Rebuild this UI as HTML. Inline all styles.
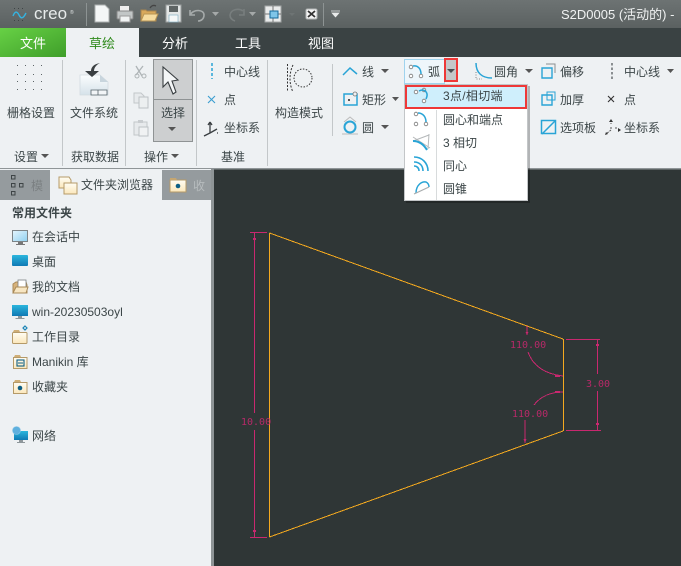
<!DOCTYPE html>
<html><head><meta charset="utf-8">
<style>
html,body{margin:0;padding:0;width:681px;height:566px;overflow:hidden;background:#2f3636;}
svg{position:absolute;left:0;top:0;display:block}
text{font-family:"Liberation Sans","Noto Sans CJK SC",sans-serif;font-size:12px;fill:#3c4648}
.w{fill:#fff;font-size:13px}
.d{font-family:"DejaVu Sans Mono","Liberation Mono",monospace;font-size:10px;fill:#c9286f;opacity:.88}
.sep{stroke:#c3c7c9;stroke-width:1}
.ic{fill:none;stroke:#29a4d6;stroke-width:1.5}
</style></head>
<body>
<svg width="681" height="566" viewBox="0 0 681 566" xmlns="http://www.w3.org/2000/svg">
<defs>
<linearGradient id="tb" x1="0" y1="0" x2="0" y2="1"><stop offset="0" stop-color="#6d7373"/><stop offset="1" stop-color="#5b6161"/></linearGradient>
<linearGradient id="gr" x1="0" y1="0" x2="1" y2="1"><stop offset="0" stop-color="#67d145"/><stop offset="1" stop-color="#3f9e2a"/></linearGradient>
<linearGradient id="bl" x1="0" y1="0" x2="0" y2="1"><stop offset="0" stop-color="#2bb6dd"/><stop offset="1" stop-color="#0f79b4"/></linearGradient>
<linearGradient id="mo" x1="0" y1="0" x2="1" y2="1"><stop offset="0" stop-color="#e5f5fd"/><stop offset="1" stop-color="#8fd0f0"/></linearGradient>
<linearGradient id="fo" x1="0" y1="0" x2="0" y2="1"><stop offset="0" stop-color="#fffdf4"/><stop offset="1" stop-color="#fbe7bb"/></linearGradient>
<linearGradient id="pa" x1="0" y1="0" x2="0" y2="1"><stop offset="0" stop-color="#fbfdfe"/><stop offset="1" stop-color="#d5e2ea"/></linearGradient>
</defs>

<!-- title bar -->
<rect width="681" height="28" fill="url(#tb)"/>
<g fill="#3d4344"><rect x="14" y="8" width="1" height="1"/><rect x="18" y="8" width="1" height="1"/><rect x="22" y="8" width="1" height="1"/><rect x="14" y="20" width="1" height="1"/><rect x="18" y="20" width="1" height="1"/><rect x="22" y="20" width="1" height="1"/></g>
<path d="M13 16c2-5 4-5 6-1s4 4 7-2" fill="none" stroke="#35b3e0" stroke-width="1.400"/>
<text x="34" y="19" style="font-size:17px;fill:#e7ebeb">creo</text>
<text x="70" y="14" style="font-size:5px;fill:#dfe3e3">®</text>
<line x1="86.500" y1="3" x2="86.500" y2="26" stroke="#8d9393"/>
<!-- new -->
<path d="M95 5h10l4 4v13H95z" fill="#f4f6f6" stroke="#acb0b0"/>
<!-- print -->
<path d="M120 6h9v5h-9z" fill="#eee"/><rect x="117" y="11" width="16" height="8" rx="1" fill="#c2c6c6" stroke="#888"/><rect x="120" y="16" width="10" height="6" fill="#f1f3f3" stroke="#999"/>
<!-- open -->
<path d="M141 21V10h5l1 1h9v10z" fill="#d9a95c" stroke="#a78550"/><path d="M141 21l3-7h14l-3 7z" fill="#f6dca0" stroke="#b89555"/><path d="M150 8c2-3 4-3 6-2" fill="none" stroke="#444" stroke-width="1.300"/>
<!-- save -->
<rect x="166" y="5" width="15" height="17" fill="#e3e6e6" stroke="#9a9e9e"/><rect x="169" y="6" width="9" height="6" fill="#5e6464"/><rect x="169" y="15" width="9" height="7" fill="#f5f7f7" stroke="#7aa9c0" stroke-width=".6"/>
<!-- undo -->
<path d="M190 10v5h5M190 15c3-6 14-6 14 0 0 4-3 6-6 6" fill="none" stroke="#a5aaaa" stroke-width="1.600"/>
<path d="M212 12h7l-3.500 4z" fill="#a5a9a9"/>
<path d="M243 11c-4-3-12-2-13 4 0 3 2 5 5 6M244 9v6h-5" fill="none" stroke="#787e7e" stroke-width="1.600"/>
<path d="M249 12h7l-3.500 4z" fill="#a5a9a9"/>
<!-- windows -->
<rect x="265" y="6" width="16" height="16" fill="#e9ebeb" stroke="#a2a6a6"/><path d="M265 14h16M273 6v16" stroke="#777" fill="none"/><rect x="270" y="11" width="8" height="7" fill="#7fc5e8" stroke="#16699a"/>
<path d="M289 13h6l-3 3z" fill="#6e7474"/>
<rect x="306" y="9" width="11" height="10" rx="1.500" fill="#f5f5f5" stroke="#b3b6b6"/><path d="M308 11l7 6m0-6l-7 6" stroke="#333" stroke-width="1.800"/>
<line x1="323.500" y1="3" x2="323.500" y2="26" stroke="#8d9393"/>
<path d="M331 11h9M332 13h7l-3.500 4z" fill="#e8eaea" stroke="#e8eaea" stroke-width=".7"/>
<text x="561" y="19" style="font-size:13px;fill:#f0f2f2">S2D0005 (活动的) -</text>

<!-- tab bar -->
<rect y="28" width="681" height="29" fill="#3a4243"/>
<rect y="28" width="66" height="29" fill="url(#gr)"/>
<rect x="66" y="28" width="73" height="29" fill="#eef1f3"/>
<text x="20" y="48" class="w">文件</text>
<text x="89" y="48" style="font-size:13px;fill:#2f8a1c">草绘</text>
<text x="162" y="48" class="w">分析</text>
<text x="235" y="48" class="w">工具</text>
<text x="308" y="48" class="w">视图</text>

<!-- ribbon -->
<rect y="57" width="681" height="111" fill="#eef1f3"/>
<rect y="168" width="681" height="1.500" fill="#8f9597"/>
<g class="sep">
<line x1="62.500" y1="60" x2="62.500" y2="166"/><line x1="125.500" y1="60" x2="125.500" y2="166"/><line x1="196.500" y1="60" x2="196.500" y2="166"/><line x1="267.500" y1="60" x2="267.500" y2="166"/><line x1="332.500" y1="64" x2="332.500" y2="136"/>
</g>
<!-- grid dots -->
<g fill="#5c6466">
<rect x="17" y="65" width="1" height="1"/><rect x="25" y="65" width="1" height="1"/><rect x="33" y="65" width="1" height="1"/><rect x="41" y="65" width="1" height="1"/>
<rect x="17" y="74" width="1" height="1"/><rect x="25" y="74" width="1" height="1"/><rect x="33" y="74" width="1" height="1"/><rect x="41" y="74" width="1" height="1"/>
<rect x="17" y="81" width="1" height="1"/><rect x="25" y="81" width="1" height="1"/><rect x="33" y="81" width="1" height="1"/><rect x="41" y="81" width="1" height="1"/>
<rect x="17" y="89" width="1" height="1"/><rect x="25" y="89" width="1" height="1"/><rect x="33" y="89" width="1" height="1"/><rect x="41" y="89" width="1" height="1"/>
</g>
<text x="7" y="117">栅格设置</text>
<text x="14" y="161">设置</text><path d="M41 154h8l-4 4z" fill="#555"/>
<!-- file system -->
<path d="M80 75h20l8 7v13H80z" fill="url(#pa)" stroke="#d3dbe0" stroke-width=".8"/><path d="M100 75v7h8" fill="#c8d5dd"/>
<path d="M91 90h16v5H91zM98 90v5" fill="#f2f5f7" stroke="#56636a" stroke-width=".8"/>
<path d="M100 63c-6 1-9 4-9 8h-6l7 6 7-6h-5c0-3 2-6 6-8z" fill="#3b4042"/>
<text x="70" y="117">文件系统</text>
<text x="71" y="161">获取数据</text>
<!-- clipboard ops -->
<path d="M136 66l6 10m1-10l-7 9" stroke="#aeb4b6" stroke-width="1.300" fill="none"/><circle cx="137" cy="76" r="2" fill="none" stroke="#aeb4b6"/><circle cx="144" cy="76" r="2" fill="none" stroke="#aeb4b6"/>
<path d="M134 93h7l3 3v7h-10z" fill="#e7eaec" stroke="#c3c8ca"/><path d="M139 97h9v11h-9z" fill="#eceff0" stroke="#bcc1c4"/>
<path d="M134 122h13v13h-13z" fill="#e7eaec" stroke="#c3c8ca"/><path d="M139 127h9v9h-9z" fill="#f0f2f3" stroke="#bcc1c4"/><rect x="138" y="120" width="5" height="3" fill="#c8cccf"/>
<!-- select -->
<rect x="153.500" y="59.500" width="39" height="82" fill="#cdcfd0" stroke="#8f9394"/><line x1="153" y1="99.500" x2="192" y2="99.500" stroke="#8f9394"/>
<path d="M163 67v20l5-5 5 12 3-2-4-11 6-1z" fill="#f4f6f7" stroke="#3a3f42" stroke-width="1.100"/>
<text x="161" y="117">选择</text>
<path d="M168 127h8l-4 4z" fill="#555"/>
<text x="144" y="161">操作</text><path d="M171 154h8l-4 4z" fill="#555"/>
<!-- datum -->
<line x1="212" y1="63" x2="212" y2="79" stroke="#29a4d6" stroke-width="1.500" stroke-dasharray="3 2"/>
<text x="224" y="76">中心线</text>
<path d="M208 96l7 7m0-7l-7 7" stroke="#3a9ed0" stroke-width="1.100"/>
<text x="224" y="104">点</text>
<path d="M210 122v11m0 0l7-4m-7 4l-6 3m6-14l-2 3m2-3l2 3m5 8h1" fill="none" stroke="#3a3f42" stroke-width="1.300"/>
<text x="224" y="132">坐标系</text>
<text x="221" y="161">基准</text>
<!-- construction -->
<path d="M287.500 64V92" fill="none" stroke="#333" stroke-dasharray="2 1.500"/>
<path d="M293 65c-4 8-4 19 0 27" fill="none" stroke="#333" stroke-dasharray="2 1.500"/>
<circle cx="303" cy="78" r="9" fill="none" stroke="#333" stroke-dasharray="1.500 1.500"/>
<text x="275" y="117">构造模式</text>

<!-- Sketch group -->
<path d="M343 75l7-7 7 6" class="ic"/>
<text x="362" y="76">线</text><path d="M381 69h8l-4 4z" fill="#555"/>
<rect x="344" y="94" width="13" height="11" fill="none" stroke="#29a4d6" stroke-width="1.500"/><circle cx="355" cy="94" r="2" fill="#eef1f3" stroke="#777" stroke-width=".8"/><rect x="348" y="99" width="2" height="2" fill="#555"/>
<text x="362" y="104">矩形</text><path d="M392 97h7l-3.500 4z" fill="#555"/>
<path d="M342 134h16M344 122l6-5 6 5" fill="none" stroke="#bbb"/><circle cx="350" cy="127" r="5.500" fill="none" stroke="#29a4d6" stroke-width="2"/>
<text x="362" y="132">圆</text><path d="M381 125h8l-4 4z" fill="#555"/>

<!-- arc button -->
<rect x="404.500" y="59.500" width="40" height="24" fill="#eef6fb" stroke="#9fd3ee"/>
<circle cx="411" cy="67" r="1.800" fill="#fff" stroke="#777" stroke-width=".8"/><circle cx="411" cy="76" r="1.800" fill="#fff" stroke="#777" stroke-width=".8"/><circle cx="421" cy="76" r="1.800" fill="#fff" stroke="#777" stroke-width=".8"/>
<path d="M413 66c5-1 8 3 8 8" class="ic"/>
<text x="428" y="76">弧</text>
<rect x="445" y="59" width="12" height="22" fill="#c4c7c9" stroke="#ee3838" stroke-width="2"/>
<path d="M447 69h8l-4 4z" fill="#4a4f52"/>

<!-- fillet etc -->
<path d="M476 63c0 10 6 15 16 15" fill="none" stroke="#29a4d6" stroke-width="1.500"/><path d="M476 72v7h6" fill="none" stroke="#888" stroke-dasharray="1 1.500"/>
<text x="494" y="76">圆角</text><path d="M525 69h8l-4 4z" fill="#555"/>
<path d="M542 68h10v10h-10z" fill="none" stroke="#29a4d6" stroke-width="1.400"/><path d="M546 64h9v9" fill="none" stroke="#8a8f92"/>
<text x="560" y="76">偏移</text>
<path d="M542 95h10v10h-10z" fill="none" stroke="#29a4d6" stroke-width="1.400"/><rect x="547" y="92" width="8" height="8" fill="none" stroke="#29a4d6"/>
<text x="560" y="104">加厚</text>
<rect x="541.500" y="120.500" width="14" height="13" fill="#eef1f3" stroke="#29a4d6" stroke-width="1.500"/><path d="M542 134l13-13" stroke="#29a4d6" stroke-width="1.500"/>
<text x="560" y="132">选项板</text>
<line x1="612" y1="63" x2="612" y2="80" stroke="#3a3f42" stroke-width="1.100" stroke-dasharray="2.500 2"/>
<text x="624" y="76">中心线</text><path d="M667 69h7l-3.500 4z" fill="#555"/>
<path d="M608 96l6 6m0-6l-6 6" stroke="#333" stroke-width="1.100"/>
<text x="624" y="104">点</text>
<path d="M611 120v4m0 3v3l-5 4m9-6h3" fill="none" stroke="#555" stroke-dasharray="2 1"/><path d="M609 122l2-3 2 3zM605 135l3-1-2-2zM618 128l3 2-3 2z" fill="#333"/>
<text x="624" y="132">坐标系</text>

<!-- left tabs / panel -->
<rect y="169" width="211" height="397" fill="#eef1f3"/>
<rect y="170" width="50" height="30" fill="#959b9e"/>
<rect x="162" y="170" width="49" height="30" fill="#959b9e"/>
<rect x="50" y="170" width="112" height="30" fill="#eef1f3"/>
<rect x="211" y="169" width="3" height="397" fill="#8e9496"/>
<g fill="none" stroke="#3e4446"><rect x="11.500" y="175.500" width="3.500" height="3.500"/><rect x="11.500" y="183.500" width="3.500" height="3.500"/><rect x="11.500" y="191.500" width="3.500" height="3.500"/><rect x="19.500" y="183.500" width="3.500" height="3.500"/></g>
<text x="31" y="190" style="fill:#7b8082">模</text>
<path d="M59 177h10l2 3v8H59z" fill="url(#fo)" stroke="#b59a68"/><path d="M64 183h13v11H64z" fill="url(#fo)" stroke="#b59a68"/>
<text x="81" y="189">文件夹浏览器</text>
<rect x="170" y="180" width="16" height="12" fill="url(#fo)" stroke="#b59a68"/><path d="M170 178h6l1 2h-7z" fill="#c5a671"/><circle cx="178" cy="186" r="2.300" fill="#0d5f85"/>
<text x="193" y="190" style="fill:#b7bcbe">收</text>

<text x="12" y="217" style="font-weight:700">常用文件夹</text>
<!-- monitor -->
<rect x="12.500" y="230.500" width="15" height="11" fill="url(#mo)" stroke="#7d8487"/><path d="M18 242h5v2h-5zM16 244h9v1h-9z" fill="#777"/>
<text x="32" y="241">在会话中</text>
<rect x="12" y="255" width="16" height="11" rx="1" fill="url(#bl)"/>
<text x="32" y="266">桌面</text>
<path d="M13 293v-9l3-2h10l1 3v8z" fill="#d7b27a" stroke="#a98a58"/><rect x="18" y="280" width="8" height="9" fill="#fff" stroke="#7a8184" stroke-width=".8"/><path d="M13 293l3-6h12l-2 6z" fill="#f7e6c2" stroke="#a98a58"/>
<text x="32" y="291">我的文档</text>
<rect x="12" y="305" width="16" height="11" fill="url(#bl)"/><path d="M18 316h4v2h-4zM15.500 318h9v1h-9z" fill="#8e979b"/>
<text x="32" y="316">win-20230503oyl</text>
<rect x="12.500" y="332.500" width="14.500" height="11" rx="1" fill="url(#fo)" stroke="#b59a68"/><path d="M13 332l1-2h5l1 2z" fill="#cfae76"/><path d="M25 326l2 2-2 2-2-2z" fill="none" stroke="#1a84b5" stroke-width="1.200"/>
<text x="32" y="341">工作目录</text>
<rect x="13.500" y="357.500" width="13.500" height="11" fill="url(#fo)" stroke="#b59a68"/><path d="M14 357l1-2h5l1 2z" fill="#cfae76"/><rect x="17" y="360" width="7" height="6" fill="none" stroke="#0d5f85" stroke-width="1.100"/><path d="M18 363h5" stroke="#0d5f85"/>
<text x="32" y="366">Manikin 库</text>
<rect x="13.500" y="382.500" width="13.500" height="11" fill="url(#fo)" stroke="#b59a68"/><path d="M14 382l1-2h5l1 2z" fill="#cfae76"/><circle cx="20" cy="388" r="2.300" fill="#0d5f85"/>
<text x="32" y="391">收藏夹</text>
<rect x="14" y="431" width="14" height="9" fill="url(#bl)"/><path d="M19 440h4v2h-4zM17 442h8v1h-8z" fill="#8e979b"/><circle cx="16.500" cy="430.500" r="4" fill="#5fb0de" stroke="#8ec7e6" stroke-width=".6"/>
<text x="32" y="440">网络</text>

<!-- Drawing -->
<rect x="214" y="169.500" width="467" height="396.500" fill="#2f3636"/>
<g fill="none" stroke="#f4a91f" stroke-width="1" shape-rendering="crispEdges">
<path d="M269.500 233L563 339M269.500 537L563 431"/>
<path d="M269.500 233V537"/>
<path d="M563.500 339V431"/>
</g>
<g fill="none" stroke="#c9286f" stroke-width="1" shape-rendering="crispEdges">
<path d="M250 232.500H267M254.500 232.500V413M254.500 430V537.500M250 537.500H267"/>
<path d="M566 339.500H600M597.500 339.500V374M597.500 391V430.500M566 430.500H601"/>
<path d="M528 352C533 366 545 374 563 376"/>
<path d="M534 405C540 397 550 392 563 392"/>
<path d="M527 326V335M525 420V443"/>
</g>
<g fill="#c9286f">
<path d="M253 238h3v2h-3zM253 530h3v2h-3zM596 344h3v2h-3zM596 423h3v2h-3z"/>
<path d="M555 375l5 0v2h-5zM555 391l5 0v2h-5zM525.500 332h3l-1.500 3zM523.500 439h3l-1.500 4z"/>
</g>
<text x="241" y="425" class="d">10.00</text>
<text x="510" y="348" class="d">110.00</text>
<text x="512" y="417" class="d">110.00</text>
<text x="586" y="387" class="d">3.00</text>

<!-- dropdown -->
<rect x="406" y="86" width="124" height="117" fill="#000" opacity=".25"/>
<rect x="404.500" y="84.500" width="123" height="116" fill="#fff" stroke="#c3c6c8"/>
<line x1="436.500" y1="110" x2="436.500" y2="200" stroke="#d8dbdc"/>
<rect x="406" y="86" width="120" height="22" fill="#cfeffc" stroke="#ee3838" stroke-width="2"/>
<circle cx="416" cy="92" r="1.800" fill="#fff" stroke="#777" stroke-width=".8"/><circle cx="424" cy="90" r="1.800" fill="#fff" stroke="#777" stroke-width=".8"/><circle cx="424" cy="101" r="1.800" fill="#fff" stroke="#777" stroke-width=".8"/>
<path d="M419 91c6-3 10 2 7 8" class="ic"/>
<text x="443" y="100" style="letter-spacing:.3px">3点/相切端</text>
<circle cx="416" cy="114" r="1.800" fill="#fff" stroke="#777" stroke-width=".8"/><circle cx="416" cy="124" r="1.800" fill="#fff" stroke="#777" stroke-width=".8"/><circle cx="426" cy="124" r="1.800" fill="#fff" stroke="#777" stroke-width=".8"/>
<path d="M418 113c5 0 8 4 8 9" class="ic"/>
<text x="443" y="124">圆心和端点</text>
<path d="M413 137l17 11M429 134l-1 15M413 141l16-6" fill="none" stroke="#b5b8ba"/>
<path d="M413 141c7 0 11 4 14 9" fill="none" stroke="#29a4d6" stroke-width="2"/>
<text x="443" y="147">3 相切</text>
<path d="M414 157c8 0 14 6 14 14M414 162c6 0 9 4 9 9M414 166c3 0 5 2 5 5" fill="none" stroke="#29a4d6" stroke-width="1.600"/>
<text x="443" y="170">同心</text>
<path d="M416 193c0-8 6-12 10-11 2 1 3 3 3 5" fill="none" stroke="#29a4d6" stroke-width="1.500"/><path d="M414 194l15-7" stroke="#a8acae" stroke-width="1.200"/>
<text x="443" y="193">圆锥</text>
</svg>
</body></html>
